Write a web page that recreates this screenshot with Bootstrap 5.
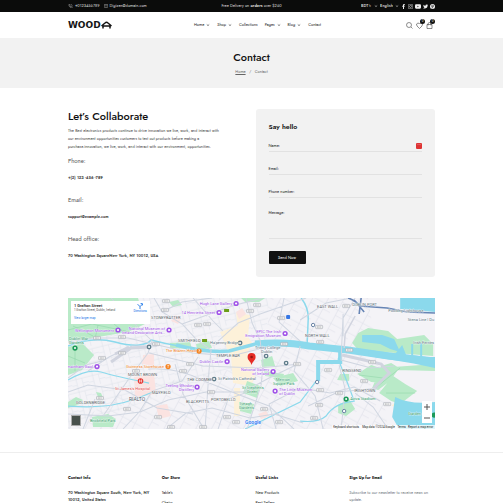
<!DOCTYPE html>
<html lang="en">
<head>
<meta charset="utf-8">
<meta name="viewport" content="width=device-width, initial-scale=1">
<title>Contact – Wooda</title>
<link href="https://cdn.jsdelivr.net/npm/bootstrap@5.3.0/dist/css/bootstrap.min.css" rel="stylesheet">
<style>
body{font-family:Jost,Lato,"Open Sans",sans-serif;font-size:4px;line-height:8px;color:#222;background:#fff}
a{color:inherit;text-decoration:none}
svg{display:block;flex-shrink:0}
.page-wrap{width:73%;margin:0 auto}
.bar3{display:grid;grid-template-columns:1fr auto 1fr;align-items:center}
.topline{background:#0b0c0b;color:#ddd;height:12px}
.topline .bar3{height:12px}
.topline select{appearance:none;background:none;border:0;color:inherit;font:inherit;font-weight:500;padding:0;line-height:8px}
.tight{gap:2px}
.mail-link{margin-left:2px}
.stroke-ico{fill:none;stroke:currentColor}
.site-head{height:26px}
.site-head .bar3{height:26px}
.brand-word{font:700 9px/10px "DejaVu Sans",sans-serif;color:#151515}
.main-menu{gap:7px;padding-left:12px}
.main-menu a{display:flex;align-items:center;gap:2px}
.tools{gap:3px;padding-right:2px}
.tool-btn{border:0;background:none;padding:0;position:relative;color:#222;width:7px}
.count-dot{position:absolute;left:4px;top:-3px;width:5px;height:5px;border-radius:50%;background:#111;color:#fff;font-size:3px;line-height:5px;text-align:center}
.banner{background:#f2f2f2;height:50px;padding-top:13px;text-align:center}
.banner h1{font-size:11px;line-height:12px;font-weight:500;margin:0;color:#111}
.banner nav{margin-top:5px;color:#666}
.banner nav a{text-decoration:underline}
.gut{--bs-gutter-x:8px;--bs-gutter-y:0}
.contact-area{padding-top:21px;padding-bottom:21px}
.lead-title{font-size:11px;line-height:14px;font-weight:500;margin:0 0 4px;color:#111}
.intro{margin:0;color:#444}
.kind{font-size:6px;line-height:10px;font-weight:400;color:#555;margin:5px 0 8px}
.kind ~ .kind{margin-top:12px}
.detail{margin:0;font-weight:600;line-height:9px;color:#333}
.form-panel{background:#f2f2f2;border-radius:3px;padding:13px;height:168px}
.form-panel h2{font-size:7px;line-height:10px;font-weight:600;margin:0 0 8px;color:#111}
.line-field{display:flex;align-items:center;border-bottom:1px solid #e2e2e2;height:12px;margin-bottom:11px;gap:3px}
.line-field.tall{height:30px;align-items:flex-start;margin-bottom:12px}
.line-field input,.line-field textarea{flex:1;min-width:0;border:0;background:none;padding:0;font:inherit;outline:0;resize:none}
.line-field textarea{height:24px}
.fill-mark{width:6px;height:6px;border-radius:1px;background:#de3434;color:#fff;line-height:5px;text-align:center}
.send-btn{background:#111;color:#fff;border:0;width:37px;height:13px;border-radius:1px;padding:0}
.map-box{position:relative;font-family:Roboto,sans-serif}
.map-box>svg{width:100%;height:auto}
.place-card{position:absolute;left:3px;top:3px;width:79px;height:23px;background:#fff;padding:2px 3px;line-height:5px}
.place-card a{color:#1a73e8}
.place-card strong{color:#111;font-weight:500}
.place-card small{display:block;font-size:3px;line-height:5px}
.place-card .street{color:#555;margin-bottom:3px}
.layer-btn{position:absolute;left:3px;bottom:3px;width:10px;height:11px;border:1px solid #aaa;background:#48514c;padding:0}
.zoomers{position:absolute;right:3px;bottom:6px;width:10px;background:#fff;display:grid}
.zoomers button{border:0;background:none;color:#555;height:11px;padding:0;display:grid;place-items:center}
.site-foot{border-top:1px solid #eee;margin-top:23px;padding-top:21px;height:51px;overflow:hidden}
.site-foot h3{font-size:4px;line-height:8px;font-weight:700;color:#111;margin:0 0 8px}
.site-foot p,.site-foot ul{line-height:7px;margin:0}
.site-foot li{margin-bottom:3px}
.site-foot .street-address{font-weight:600;color:#333}
</style>
<script src="https://cdn.jsdelivr.net/npm/bootstrap@5.3.0/dist/js/bootstrap.bundle.min.js"></script>
</head>
<body>
<svg width="0" height="0" class="position-absolute" aria-hidden="true"><defs>
<symbol id="chev" viewBox="0 0 4 4"><path d="M.8 1.5 2 2.6 3.2 1.5" fill="none" stroke="currentColor" stroke-width=".6"/></symbol>
</defs></svg>
<div class="topline"><div class="page-wrap bar3">
 <div class="d-flex align-items-center tight">
  <a href="#" class="d-flex align-items-center tight"><svg class="stroke-ico" width="5" height="4" viewBox="0 0 16 16" stroke-width="1.5"><path d="M2 1h3l2 4-2 2q1 3 4 4l2-2 4 2v3q-2 2-5 1Q2 11 1 4ZM9 1q5 1 6 6"/></svg>+0123456789</a>
  <a href="#" class="d-flex align-items-center tight mail-link"><svg class="stroke-ico" width="4" height="4" viewBox="0 0 16 16" stroke-width="1.5"><rect x="1" y="2" width="14" height="12" rx="2"/><path d="m2 4 6 5 6-5"/></svg>Digizen@domain.com</a>
 </div>
 <div>Free Delivery on <b>orders</b> over $260</div>
 <div class="d-flex align-items-center justify-content-end tight">
  <select aria-label="Currency"><option>BDT ৳</option></select><svg width="4" height="4"><use href="#chev"/></svg>
  <select aria-label="Language"><option>English</option></select><svg width="4" height="4"><use href="#chev"/></svg>
  <svg width="5" height="5" viewBox="0 0 20 20" fill="#eee"><path d="M8 20v-9H5V7h3V4q0-4 4-4h3v4h-2q-1 0-1 1v2h3l-1 4h-2v9Z"/></svg>
  <svg width="5" height="5" viewBox="0 0 20 20" fill="none" stroke="#eee" stroke-width="2"><rect x="1" y="1" width="18" height="18" rx="5"/><circle cx="10" cy="10" r="4"/><circle cx="15" cy="5" r=".5"/></svg>
  <svg width="6" height="5" viewBox="0 0 22 18"><rect y="1" width="22" height="16" rx="4" fill="#eee"/><path d="m9 6 5 3-5 3Z" fill="#111"/></svg>
  <svg width="5" height="5" viewBox="0 0 20 20" fill="#eee"><path d="M1 3q4 4 9 4 0-5 4-5 2 0 3 1l3-1-2 3 2-.5-2 2q0 11-12 11-3 0-6-2 4 0 6-2-3 0-4-3h2Q1 9 1 7l2 .5Q0 5 1 3Z"/></svg>
  <svg width="5" height="5" viewBox="0 0 20 20"><circle cx="10" cy="10" r="10" fill="#eee"/><path d="m8 18 3-11M6 11q-2-6 4-6t4 5q-2 5-5 2" fill="none" stroke="#111" stroke-width="2"/></svg>
 </div>
</div></div>
<header class="site-head"><div class="page-wrap bar3">
 <a href="#" class="d-flex align-items-center" aria-label="Wooda"><span class="brand-word">WOOD</span><svg width="11" height="8" viewBox="0 0 22 16" fill="none" stroke="#151515" stroke-width="3"><path d="M1 10 8 4q3-3 6 0l7 6M4 15v-5h14v5"/></svg></a>
 <nav class="main-menu d-flex">
  <a href="#">Home <svg width="4" height="4"><use href="#chev"/></svg></a><a href="#">Shop <svg width="4" height="4"><use href="#chev"/></svg></a><a href="#">Collections</a><a href="#">Pages <svg width="4" height="4"><use href="#chev"/></svg></a><a href="#">Blog <svg width="4" height="4"><use href="#chev"/></svg></a><a href="#">Contact</a>
 </nav>
 <div class="d-flex justify-content-end tools">
  <button class="tool-btn" aria-label="Search"><svg class="stroke-ico" width="7" height="7" viewBox="0 0 14 14"><circle cx="6" cy="6" r="5"/><path d="m10 10 3 3"/></svg></button>
  <button class="tool-btn" aria-label="Wishlist"><svg class="stroke-ico" width="7" height="7" viewBox="0 0 14 14"><path d="M7 13 2 8q-3-5 2-6 2 0 3 2 1-2 3-2 5 1 2 6Z"/></svg><span class="count-dot">0</span></button>
  <button class="tool-btn" aria-label="Cart"><svg class="stroke-ico" width="7" height="7" viewBox="0 0 14 14"><path d="M2 5h10v8H2ZM4 7V4q0-3 3-3t3 3v3"/></svg><span class="count-dot">0</span></button>
 </div>
</div></header>
<section class="banner"><h1>Contact</h1><nav aria-label="Breadcrumb"><a href="#">Home</a> &nbsp; / &nbsp; Contact</nav></section>
<main class="page-wrap">
 <div class="row gut contact-area">
  <div class="col-6">
   <h2 class="lead-title">Let’s Collaborate</h2>
   <p class="intro">The Best electronics products continue to drive innovation we live, work, and interact with<br>our environment opportunities customers to test out products before making a<br>purchase.innovation, we live, work, and interact with our environment, opportunities.</p>
   <h3 class="kind">Phone:</h3><p class="detail">+(2) 123 -456 -789</p>
   <h3 class="kind">Email:</h3><p class="detail">support@example.com</p>
   <h3 class="kind">Head office:</h3><p class="detail">70 Washington SquareNew York, NY 10012, USA</p>
  </div>
  <div class="col-6"><form class="form-panel">
   <h2>Say hello</h2>
   <div class="line-field"><label for="fn">Name:</label><input id="fn"><span class="fill-mark">···</span></div>
   <div class="line-field"><label for="fe">Email:</label><input id="fe" type="email"></div>
   <div class="line-field"><label for="fp">Phone number:</label><input id="fp" type="tel"></div>
   <div class="line-field tall"><label for="fm">Message:</label><textarea id="fm"></textarea></div>
   <button type="button" class="send-btn">Send Now</button>
  </form></div>
 </div>
 <div class="map-box">
 <svg viewBox="0 0 367 131" role="img" aria-label="Map of Dublin">
  <defs>
   <pattern id="st" width="17" height="13" patternUnits="userSpaceOnUse" patternTransform="rotate(-14)"><path d="M0 3h17M5 0v13M0 9h5M11 3v10M11 8h6" stroke="#e0e3ea" stroke-width=".6" fill="none"/></pattern>
   <pattern id="st2" width="14" height="15" patternUnits="userSpaceOnUse" patternTransform="rotate(28)"><path d="M0 4h14M6 0v15M6 10h8" stroke="#dfe2e9" stroke-width=".6" fill="none"/></pattern>
   <g id="pinv"><circle r="2.6" fill="#a052e8"/><circle r="1.1" fill="#fff"/></g>
   <g id="pino"><circle r="2.6" fill="#f58220"/><path d="M-.9-1.2h1.8L0 .2v1.2" stroke="#fff" stroke-width=".6" fill="none"/></g>
   <g id="ping"><circle r="2.4" fill="#607d8b"/><circle r="1" fill="#fff"/></g>
   <g id="tag"><rect x="-3.5" y="-1.6" width="7" height="3.2" rx=".6" fill="#f5f6f7" stroke="#9a9fa6" stroke-width=".5"/><path d="M-2.2 0h4.400" stroke="#999" stroke-width=".9" stroke-dasharray="1 .4"/></g>
  </defs>
  <path fill="#f4f3f7" d="M0 0h367v131H0z"/>
  <path fill="url(#st)" d="M70 0h130v60L0 131V60Z"/><path fill="url(#st2)" d="M200 0h100l20 131H0L60 90 200 65Z"/>
  <g fill="#fdf1d9"><path d="m152 34 20-7 12 18-5 11 8 22-4 10-18-3-2-25ZM168 15l14 2-2 20-10-5ZM166 90h6v28h-6ZM323 108l8-8v9Z"/></g>
  <g fill="#fbe3e1"><path d="m66 79 20-3 2 20-21 3ZM75 57l11-1v12l-12-2ZM168 14l6-4 4 6-7 5ZM88 108l11-2 4 12-12 3ZM107 17l6 3-3 6-7-3ZM190 116l8-3 3 5-8 3Z"/></g>
  <g fill="#b9eac8">
   <path d="M0 0h70l7 26-17 8-30 5-30 4ZM0 49l14-4 12 12-12 15-14 5ZM24 119l16-3 8 5-3 8H25ZM102 45l20-1 2 7-22-1ZM128 46l13-3 3 7-15 2ZM173 0h24l-6 4h-14ZM193 62l11-4 3 10-13 1ZM179 83l13 5-3 12-14-5ZM171 104l15 2-3 10-11-3ZM205 80l20-5 5 8-18 5ZM289 76l14-9 15 5-3 13-12-1ZM313 68l10-3 8 5-9 13-12 9-6-2ZM325 78l12 8 12 7-17 13-9-3-12-8ZM272 76h9v7l-12-1ZM270 107l11-6 6 10-9 7-8-3ZM284 45l6-10 10-5 20 3 9 8 27-4 9 9v12l-75-6ZM325 69l42-3v7l-39-1ZM0 104l8-5 7 3-5 5-10 3ZM196 73l20 3-2 4-17-2ZM101 4l9-2 4 5-9 2ZM28 94l3 7 4-1-2-5Z"/>
  </g>
  <g stroke="#8ad3a4" stroke-width=".5" fill="none"><path d="M0 32 24 26l38 8M5 28l20 10M30 27l-3 14M46 26l12 10M0 58l17 7M7 50v23M291 77l24 3M306 91l26-21M318 95l29 0M180 88l10 8"/></g>
  <g fill="none" stroke="#8bd9ec">
   <path d="M0 48q24-10 47-4 15 4 24 3t12-5q15 4 28 6" stroke-width="1.5"/><path d="M108 47q30 8 53 6l30-8 42 1" stroke-width="3.5"/>
   <path d="M187 46q30-3 54 2l39 4 40 6 47 5" stroke-width="7"/><path d="m275 52-5 9q10 25 16 42-20 2-28 15-8 7-26 5M0 82q20-12 33-8t48 11M0 108q40 3 64-6t20-8" stroke-width="1.2"/><path d="M250 83V64h22V51" stroke-width="4"/><path d="m248 83-16 21-55 27" stroke-width="1.2"/><path d="M233 0q8 10 7 23l-1 23" stroke-width="1.5"/>
  </g>
  <g fill="#8bd9ec"><path d="M332 0h35v14l-35-3ZM294 37l20 0 12 4 6 13-10-3-10-5-18-2ZM327 56l7-9 4 10 5 0V46h2v12h7V45h2v14h13v11l-43-9ZM327 99q15 8 40 5v27h-36l-7-12ZM300 52l67 8v9l-67-11Z"/></g>
  <g fill="none" stroke="#d0d6e1" stroke-width="1">
   <path d="M0 44 25 40l35 0 25 6 40 9 38 3 28-7M86 0l8 14 20 12 15 16 14 10-2 20-4 59M94 14l20-10 30-4M114 26l50-18 30-8M178 0l6 25 8 17 3 25-2 20-14 44M150 43l20-18 22-9 46-16M125 0l20 23 10 10M43 0l23 25 18 18-4 12-20 27-25 36M81 55l54 13 56 2 41-4M20 73l21-14 23-11 25 0M0 80l18-13 16-4M80 71q30-2 56 12l38 15 27 10 25 23M55 131l17-18 12-20 30-10 16-24M0 116l40 2 32-4 28-12 38-8 37 0 26-14 31-15M150 131l10-30 25-9M98 131l20-16 26-5 38 10 24-4 29 9M107 66l8 30 21 35M208 131l-7-25 31-16 30 5 24-6 26 14M216 0l-5 24 21 19M232 22l26-17 25-5M232 48l-6 25 21 25 8 33M287 0l-12 20v18M275 16l-1 22-1 24 30 8 23-2M271 67l6 24-4 40M287 95l18 14 15 22M240 108l30-14 40-4M0 94l20-7 37 5 32 18 36 6M15 131l12-30"/>
  </g>
  <g fill="none" stroke="#d1d4df" stroke-width="3"><path d="m43 64 20-14 19-1M47 56l14-7M303 93l18-18-8-9-17-4-22-5"/><path d="m276 50 1-14 10-18" stroke-width="1.500"/></g>
  <g fill="none" stroke="#6785b5" stroke-width="1.6"><path d="M280 0q8 3 12 8l27 2 20 4 28 1M291 16l2-16M286 2l10 12"/></g>
  <g>
   <use href="#tag" x="98" y="3"/><use href="#tag" x="97" y="12"/><use href="#tag" x="29" y="40"/><use href="#tag" x="54" y="39"/><use href="#tag" x="88" y="46"/><use href="#tag" x="54" y="55"/><use href="#tag" x="34" y="60"/><use href="#tag" x="68" y="73"/><use href="#tag" x="122" y="66"/><use href="#tag" x="115" y="73"/><use href="#tag" x="130" y="27"/><use href="#tag" x="139" y="26"/><use href="#tag" x="182" y="13"/><use href="#tag" x="189" y="7"/><use href="#tag" x="213" y="20"/><use href="#tag" x="32" y="100"/><use href="#tag" x="59" y="111"/><use href="#tag" x="90" y="119"/><use href="#tag" x="103" y="129"/><use href="#tag" x="143" y="94"/><use href="#tag" x="159" y="119"/><use href="#tag" x="168" y="124"/><use href="#tag" x="196" y="111"/><use href="#tag" x="216" y="46"/><use href="#tag" x="229" y="66"/><use href="#tag" x="278" y="8"/><use href="#tag" x="251" y="29"/><use href="#tag" x="252" y="44"/><use href="#tag" x="281" y="52"/><use href="#tag" x="304" y="64"/><use href="#tag" x="260" y="72"/><use href="#tag" x="296" y="83"/><use href="#tag" x="252" y="92"/><use href="#tag" x="271" y="95"/><use href="#tag" x="319" y="106"/><use href="#tag" x="246" y="120"/><use href="#tag" x="211" y="124"/><use href="#tag" x="135" y="129"/><use href="#tag" x="251" y="107"/>
   <use href="#pinv" x="168" y="5.500"/><use href="#pinv" x="151" y="14.500"/><use href="#pinv" x="50" y="32"/><use href="#pinv" x="101" y="32"/><use href="#pinv" x="29" y="68.500"/><use href="#pinv" x="159" y="63.500"/><use href="#pinv" x="129" y="89"/><use href="#pinv" x="217" y="35.500"/><use href="#pinv" x="205" y="73.500"/><use href="#pinv" x="207" y="93"/>
   <use href="#pino" x="131" y="53"/><use href="#pino" x="100" y="68.500"/>
   <use href="#ping" x="172" y="45"/><use href="#ping" x="146" y="81"/><use href="#ping" x="198" y="58"/><use href="#ping" x="218" y="65"/><use href="#ping" x="81" y="49"/>
   <g fill="#1b9a59"><circle cx="7" cy="50" r="2.600"/><circle cx="278" cy="101" r="2.600"/><circle cx="366" cy="117" r="2.600"/></g><g fill="#fff"><circle cx="7" cy="50" r="1"/><circle cx="278" cy="101" r="1"/></g>
   <circle cx="72.500" cy="83" r="2.800" fill="#e53935"/><path d="M71.500 81.500v3m2-3v3m-2-1.500h2" stroke="#fff" stroke-width=".6"/>
   <g fill="#6b9d18"><rect x="134" y="41" width="5" height="3"/><rect x="156" y="11" width="5" height="3"/></g>
   <rect x="218" y="17" width="4" height="4" rx="1" fill="#3577e5"/>
   <g fill="#fff" stroke="#59769b" stroke-width=".9"><circle cx="245" cy="27" r="1.700"/><circle cx="249" cy="84" r="1.700"/><circle cx="276" cy="113" r="1.700"/></g>
  </g>
  <g font-size="4" stroke="#fff" stroke-width=".5" paint-order="stroke">
   <g fill="#9b4de3" text-anchor="end"><text x="164" y="7">Hugh Lane Gallery</text><text x="147" y="16">14 Henrietta Street</text><text x="46" y="34">Wellington Monument</text><text x="97" y="32">National Museum of</text><text x="97" y="36">Ireland-Decorative Arts…</text><text x="25" y="70">mainham Gaol</text><text x="155" y="65">Dublin Castle</text><text x="126" y="89">Teeling Whiskey</text><text x="126" y="93">Distillery</text><text x="213" y="35">EPIC The Irish</text><text x="213" y="39">Emigration Museum</text><text x="201" y="73">National Gallery</text><text x="201" y="77">of Ireland</text></g>
   <g fill="#9b4de3"><text x="211" y="93">The Little Museum</text><text x="211" y="97">of Dublin</text></g>
   <g fill="#ee7b17" text-anchor="end"><text x="128" y="54">The Brazen Head</text><text x="96" y="70">Guinness Storehouse</text></g>
   <text x="47" y="92" fill="#e24444">St James's Hospital</text>
   <g fill="#56717d"><text x="142" y="46">Ha'penny Bridge</text><text x="150" y="82">St Patrick's Cathedral</text><text x="187" y="51">Trinity College</text><text x="193" y="55">Dublin</text><text x="284" y="8">DUBLIN PORT</text><text x="320" y="14">Poolbeg Lighthouse</text><text x="366" y="23" text-anchor="end">Stena Line | Du</text><text x="366" y="46" text-anchor="end">Irish Ferries</text></g>
   <g fill="#249461"><text x="1" y="42">Dublin War</text><text x="1" y="46">Gardens</text><text x="22" y="124">Brickfield Park</text><text x="174" y="91">St Stephen's</text><text x="179" y="95">Green</text><text x="208" y="83">Merrion</text><text x="205" y="87">Square Park</text><text x="172" y="107">Iveagh</text><text x="171" y="111">Gardens</text><text x="282" y="102">Aviva Stadium</text><text x="340" y="117">Garden</text></g>
   <g fill="#565b65"><text x="83" y="21">STONEYBATTER</text><text x="110" y="44">SMITHFIELD</text><text x="148" y="59">TEMPLE BAR</text><text x="119" y="83">THE COOMBE</text><text x="60" y="78">MOUNT BROWN</text><text x="61" y="103" font-size="5">RIALTO</text><text x="84" y="96">MAYFIELD</text><text x="118" y="105">BLACKPITTS</text><text x="143" y="103">PORTOBELLO</text><text x="249" y="10">EAST WALL</text><text x="237" y="39">NORTH WALL</text><text x="274" y="74">RINGSEND</text><text x="286" y="94">IRISHTOWN</text><text x="8" y="106">GOLDENBRIDGE</text></g>
   <text x="177" y="126" font-size="5" font-weight="700" fill="#4285f4">Google</text>
  </g>
  <path d="M183.500 67c-1-4-4-4.500-4-8a4 4 0 0 1 8 0c0 3.500-3 4-4 8Z" fill="#e52c26"/><circle cx="183.500" cy="59" r="1.300" fill="#92150f"/>
  <path d="M264 127h103v4H264z" fill="#fff" opacity=".75"/><g font-size="3" fill="#222"><text x="265" y="130">Keyboard shortcuts</text><text x="294" y="130">Map data ©2024 Google</text><text x="365" y="130" text-anchor="end">Terms &#160; Report a map error</text></g>
 </svg>
 <div class="place-card d-flex justify-content-between"><div><strong>1 Grafton Street</strong><small class="street">1 Grafton Street, Dublin, Ireland</small><a href="#"><small>View larger map</small></a></div><a href="#" class="text-center"><svg class="mx-auto" width="6" height="6" viewBox="0 0 10 10" fill="none" stroke="#1a73e8" stroke-width="1.500"><path d="M5 10V6L1 2M5 6l4-4M6 1h3v3"/></svg><small>Directions</small></a></div>
 <button class="layer-btn" aria-label="Satellite view"></button>
 <div class="zoomers"><button aria-label="Zoom in"><svg width="6" height="6" viewBox="0 0 6 6" stroke="#555"><path d="M0 3h6M3 0v6"/></svg></button><button aria-label="Zoom out"><svg width="6" height="6" viewBox="0 0 6 6" stroke="#555"><path d="M0 3h6"/></svg></button></div>
 </div>
</main>
<footer class="site-foot"><div class="page-wrap"><div class="row gut">
 <div class="col-3"><h3>Contact Info</h3><p class="street-address">70 Washington Square South, New York, NY<br>10012, United States</p></div>
 <div class="col-3"><h3>Our Store</h3><ul class="list-unstyled"><li><a href="#">Table's</a></li><li><a href="#">Chairs</a></li></ul></div>
 <div class="col-3"><h3>Useful Links</h3><ul class="list-unstyled"><li><a href="#">New Products</a></li><li><a href="#">Best Sellers</a></li></ul></div>
 <div class="col-3"><h3>Sign Up for Email</h3><p class="text-secondary">Subscribe to our newsletter to receive news on<br>update.</p></div>
</div></div></footer>
</body>
</html>
